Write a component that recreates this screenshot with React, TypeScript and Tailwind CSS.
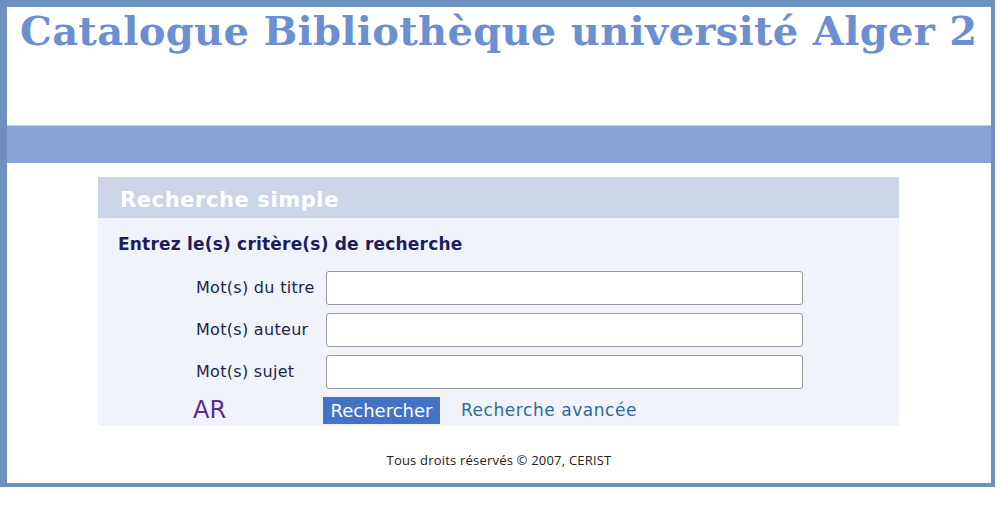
import React from "react";

const fields = ["Mot(s) du titre", "Mot(s) auteur", "Mot(s) sujet"];

export default function App() {
  return (
    <div className="w-[1000px] h-[513px] bg-white">
      <div className="w-[995px] h-[487px] border-t-[7px] border-l-[7px] border-r-[4px] border-b-[4px] border-[#6f8fbf] flex flex-col">
        {/* Title */}
        <div className="h-[119px] border-b border-[#c9cdd4]">
          <h1
            className="pl-[13px] pt-[4px] text-[#6b8fd0] font-bold text-[40px] leading-[40px] tracking-[0.3px] whitespace-nowrap"
            style={{ fontFamily: '"DejaVu Serif", serif' }}
          >
            Catalogue Bibliothèque université Alger 2
          </h1>
        </div>
        <div className="h-[37px] bg-[#87a3d6]" />

        {/* Search panel */}
        <div className="mt-[14px] ml-[91px] w-[801px]" style={{ fontFamily: '"DejaVu Sans", Verdana, sans-serif' }}>
          <div className="h-[41px] bg-[#ccd5e5] flex items-center pl-[22px] pt-[6px]">
            <span className="text-white font-bold text-[21px] tracking-[0.6px]">Recherche simple</span>
          </div>
          <div className="bg-[#f0f4fa] h-[208px] pl-[20px] pt-[16px]">
            <div className="text-[#1c1c5e] font-bold text-[17px] leading-[20px] tracking-[0.2px]">
              Entrez le(s) critère(s) de recherche
            </div>
            <div className="mt-[17px] flex flex-col gap-[8px]">
              {fields.map((f) => (
                <div key={f} className="flex items-center h-[34px]">
                  <label className="w-[208px] pl-[78px] text-[16px] tracking-[0.3px] text-[#23234a]">{f}</label>
                  <input
                    type="text"
                    className="w-[477px] h-[34px] bg-white border border-[#9a9a9a] rounded-[3px]"
                  />
                </div>
              ))}
            </div>
            <div className="mt-[8px] flex items-center h-[27px]">
              <span className="w-[205px] pl-[75px] text-[#5b2d8e] text-[24px] leading-[27px]">AR</span>
              <button className="h-[27px] w-[117px] bg-[#4472c4] text-white text-[18px] leading-[27px]">
                Rechercher
              </button>
              <a className="ml-[21px] text-[#2f6a9a] text-[17px] tracking-[0.55px]">Recherche avancée</a>
            </div>
          </div>
        </div>

        {/* Footer */}
        <div className="mt-[26px] flex justify-center">
          <span
            className="text-[13px] leading-[16px] text-[#222] tracking-[0.2px]"
            style={{ fontFamily: '"Open Sans", sans-serif' }}
          >
            Tous droits réservés © 2007, CERIST
          </span>
        </div>
      </div>
    </div>
  );
}
